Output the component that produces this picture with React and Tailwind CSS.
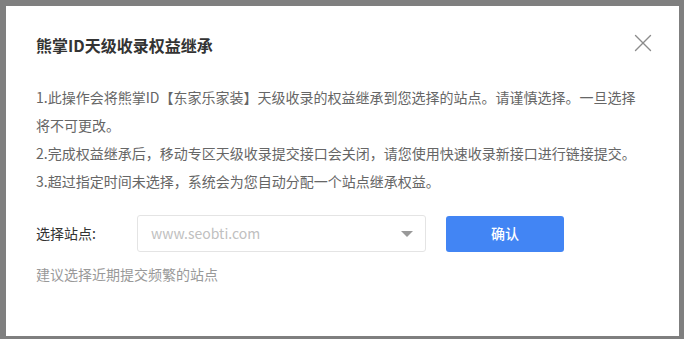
import { X } from 'lucide-react';

const rules = [
  '1.此操作会将熊掌ID【东家乐家装】天级收录的权益继承到您选择的站点。请谨慎选择。一旦选择将不可更改。',
  '2.完成权益继承后，移动专区天级收录提交接口会关闭，请您使用快速收录新接口进行链接提交。',
  '3.超过指定时间未选择，系统会为您自动分配一个站点继承权益。',
];

export default function App() {
  return (
    <div
      className="w-[684px] h-[339px] bg-[#7f7f7f] p-[6px] pb-[3px] overflow-hidden"
      style={{ fontFamily: '"Microsoft YaHei", "Noto Sans CJK SC", sans-serif' }}
    >
      <div className="relative h-full w-[673px] bg-white pl-[30px] pt-[26px]">
        <button className="absolute right-[21px] top-[22px] text-[#8c8c8c]">
          <X className="h-[30px] w-[30px]" strokeWidth={1.1} />
        </button>

        <h2 className="text-[16px] font-bold leading-[26px] text-[#333]">熊掌ID天级收录权益继承</h2>

        <div className="mt-[25px] w-[604px] text-[14px] leading-[28px] text-[#666]">
          {rules.map((r) => (
            <p key={r}>{r}</p>
          ))}
        </div>

        <div className="mt-[20px] flex items-center">
          <span className="w-[101px] text-[14px] text-[#333]">选择站点:</span>
          <div className="flex h-[37px] w-[289px] items-center justify-between rounded-[3px] border border-[#e4e4e4] pl-[13px] pr-[12px]">
            <span className="text-[14px] text-[#c0c0c0]">www.seobti.com</span>
            <span className="h-0 w-0 border-x-[6px] border-t-[6px] border-x-transparent border-t-[#999]" />
          </div>
          <button className="ml-[20px] h-[36px] w-[118px] rounded-[3px] bg-[#4285f4] text-[14px] font-medium text-white">
            确认
          </button>
        </div>

        <p className="mt-[12px] text-[14px] text-[#999]">建议选择近期提交频繁的站点</p>
      </div>
    </div>
  );
}
